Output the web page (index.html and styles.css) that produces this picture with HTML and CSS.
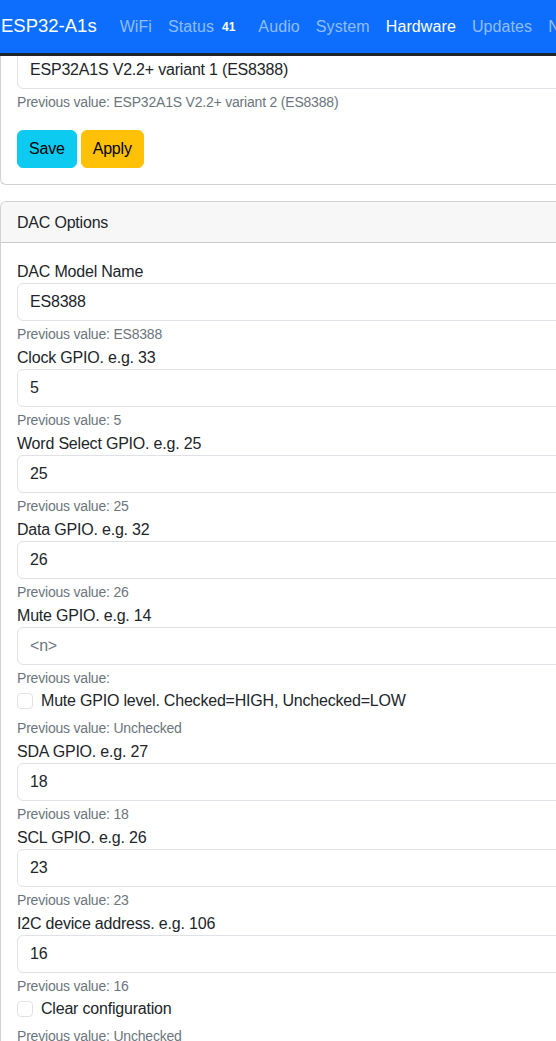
FILE: index.html
```html
<!DOCTYPE html>
<html lang="en">
<head>
<meta charset="utf-8">
<title>ESP32-A1s Hardware</title>
<link rel="stylesheet" href="styles.css">
</head>
<body>
<nav class="navbar">
  <span class="brand">ESP32-A1s</span>
  <a class="nav-link">WiFi</a>
  <a class="nav-link">Status<span class="badge">41</span></a>
  <a class="nav-link">Audio</a>
  <a class="nav-link">System</a>
  <a class="nav-link active">Hardware</a>
  <a class="nav-link">Updates</a>
  <a class="nav-link">Network</a>
</nav>
<main class="page">
  <section class="card">
    <div class="card-body">
      <div class="select first">ESP32A1S V2.2+ variant 1 (ES8388)</div>
      <div class="help">Previous value: ESP32A1S V2.2+ variant 2 (ES8388)</div>
      <div class="buttons">
        <button class="btn btn-save">Save</button>
        <button class="btn btn-apply">Apply</button>
      </div>
    </div>
  </section>
  <section class="card card-gap">
    <div class="card-header">DAC Options</div>
    <div class="card-body">
      <div class="label">DAC Model Name</div>
      <div class="input">ES8388</div>
      <div class="help">Previous value: ES8388</div>
      <div class="label">Clock GPIO. e.g. 33</div>
      <div class="input">5</div>
      <div class="help">Previous value: 5</div>
      <div class="label">Word Select GPIO. e.g. 25</div>
      <div class="input">25</div>
      <div class="help">Previous value: 25</div>
      <div class="label">Data GPIO. e.g. 32</div>
      <div class="input">26</div>
      <div class="help">Previous value: 26</div>
      <div class="label">Mute GPIO. e.g. 14</div>
      <div class="input placeholder">&lt;n&gt;</div>
      <div class="help">Previous value:</div>
      <div class="check"><span class="box"></span><span>Mute GPIO level. Checked=HIGH, Unchecked=LOW</span></div>
      <div class="help">Previous value: Unchecked</div>
      <div class="label">SDA GPIO. e.g. 27</div>
      <div class="input">18</div>
      <div class="help">Previous value: 18</div>
      <div class="label">SCL GPIO. e.g. 26</div>
      <div class="input">23</div>
      <div class="help">Previous value: 23</div>
      <div class="label">I2C device address. e.g. 106</div>
      <div class="input">16</div>
      <div class="help">Previous value: 16</div>
      <div class="check"><span class="box"></span><span>Clear configuration</span></div>
      <div class="help">Previous value: Unchecked</div>
    </div>
  </section>
</main>
</body>
</html>
```
FILE: styles.css
```css
html, body {
  margin: 0;
  padding: 0;
  overflow: hidden;
}
body {
  font-family: "Liberation Sans", Arial, sans-serif;
  font-size: 16px;
  line-height: 24px;
  color: #212529;
  background: #fff;
  width: 556px;
  height: 1041px;
}
.navbar {
  position: fixed;
  top: 0;
  left: 0;
  z-index: 10;
  width: 800px;
  height: 53px;
  background: #0d6efd;
  border-bottom: 3px solid #212529;
  display: flex;
  align-items: center;
  padding-left: 1px;
  white-space: nowrap;
}
.brand {
  color: #fff;
  font-size: 18.5px;
  margin-right: 15px;
  margin-top: -2px;
}
.nav-link {
  color: rgba(255, 255, 255, 0.55);
  padding: 0 8px;
  letter-spacing: 0.1px;
  display: flex;
  align-items: center;
}
.nav-link.active {
  color: #fff;
}
.badge {
  color: #fff;
  font-size: 12px;
  font-weight: bold;
  padding: 0 7px 0 8px;
  line-height: 12px;
  letter-spacing: 0;
}
.page {
  width: 760px;
  letter-spacing: -0.2px;
}
.card {
  border: 1px solid rgba(0, 0, 0, 0.175);
  border-radius: 6px;
  background: #fff;
}
.card-gap {
  margin-top: 16px;
}
.card-header {
  background: #f7f7f7;
  padding: 9px 16px 7px;
  border-bottom: 1px solid rgba(0, 0, 0, 0.175);
  border-radius: 6px 6px 0 0;
}
.card-body {
  padding: 16px;
  display: flex;
  flex-direction: column;
}
.label {
  height: 24px;
  padding-top: 1px;
  box-sizing: border-box;
}
.select, .input {
  box-sizing: border-box;
  height: 38px;
  border: 1px solid #dee2e6;
  border-radius: 6px;
  padding: 6px 12px;
  color: #212529;
}
.select.first {
  margin-top: 34px;
}
.input.placeholder {
  color: #6c757d;
}
.help {
  margin-top: 3px;
  font-size: 14px;
  line-height: 21px;
  color: #6c757d;
}
.check {
  height: 24px;
  margin-bottom: 2px;
  display: flex;
  align-items: center;
  gap: 8px;
}
.box {
  box-sizing: border-box;
  width: 16px;
  height: 16px;
  border: 1px solid #dee2e6;
  border-radius: 4px;
  background: #fff;
}
.buttons {
  display: flex;
  gap: 4px;
  margin-top: 17px;
}
.btn {
  font-family: inherit;
  font-size: 16px;
  line-height: 24px;
  letter-spacing: -0.2px;
  padding: 6px 11px;
  height: 38px;
  border: 1px solid transparent;
  border-radius: 6px;
  color: #000;
}
.btn-save {
  background: #0dcaf0;
  border-color: #0dcaf0;
}
.btn-apply {
  background: #ffc107;
  border-color: #ffc107;
}
```
